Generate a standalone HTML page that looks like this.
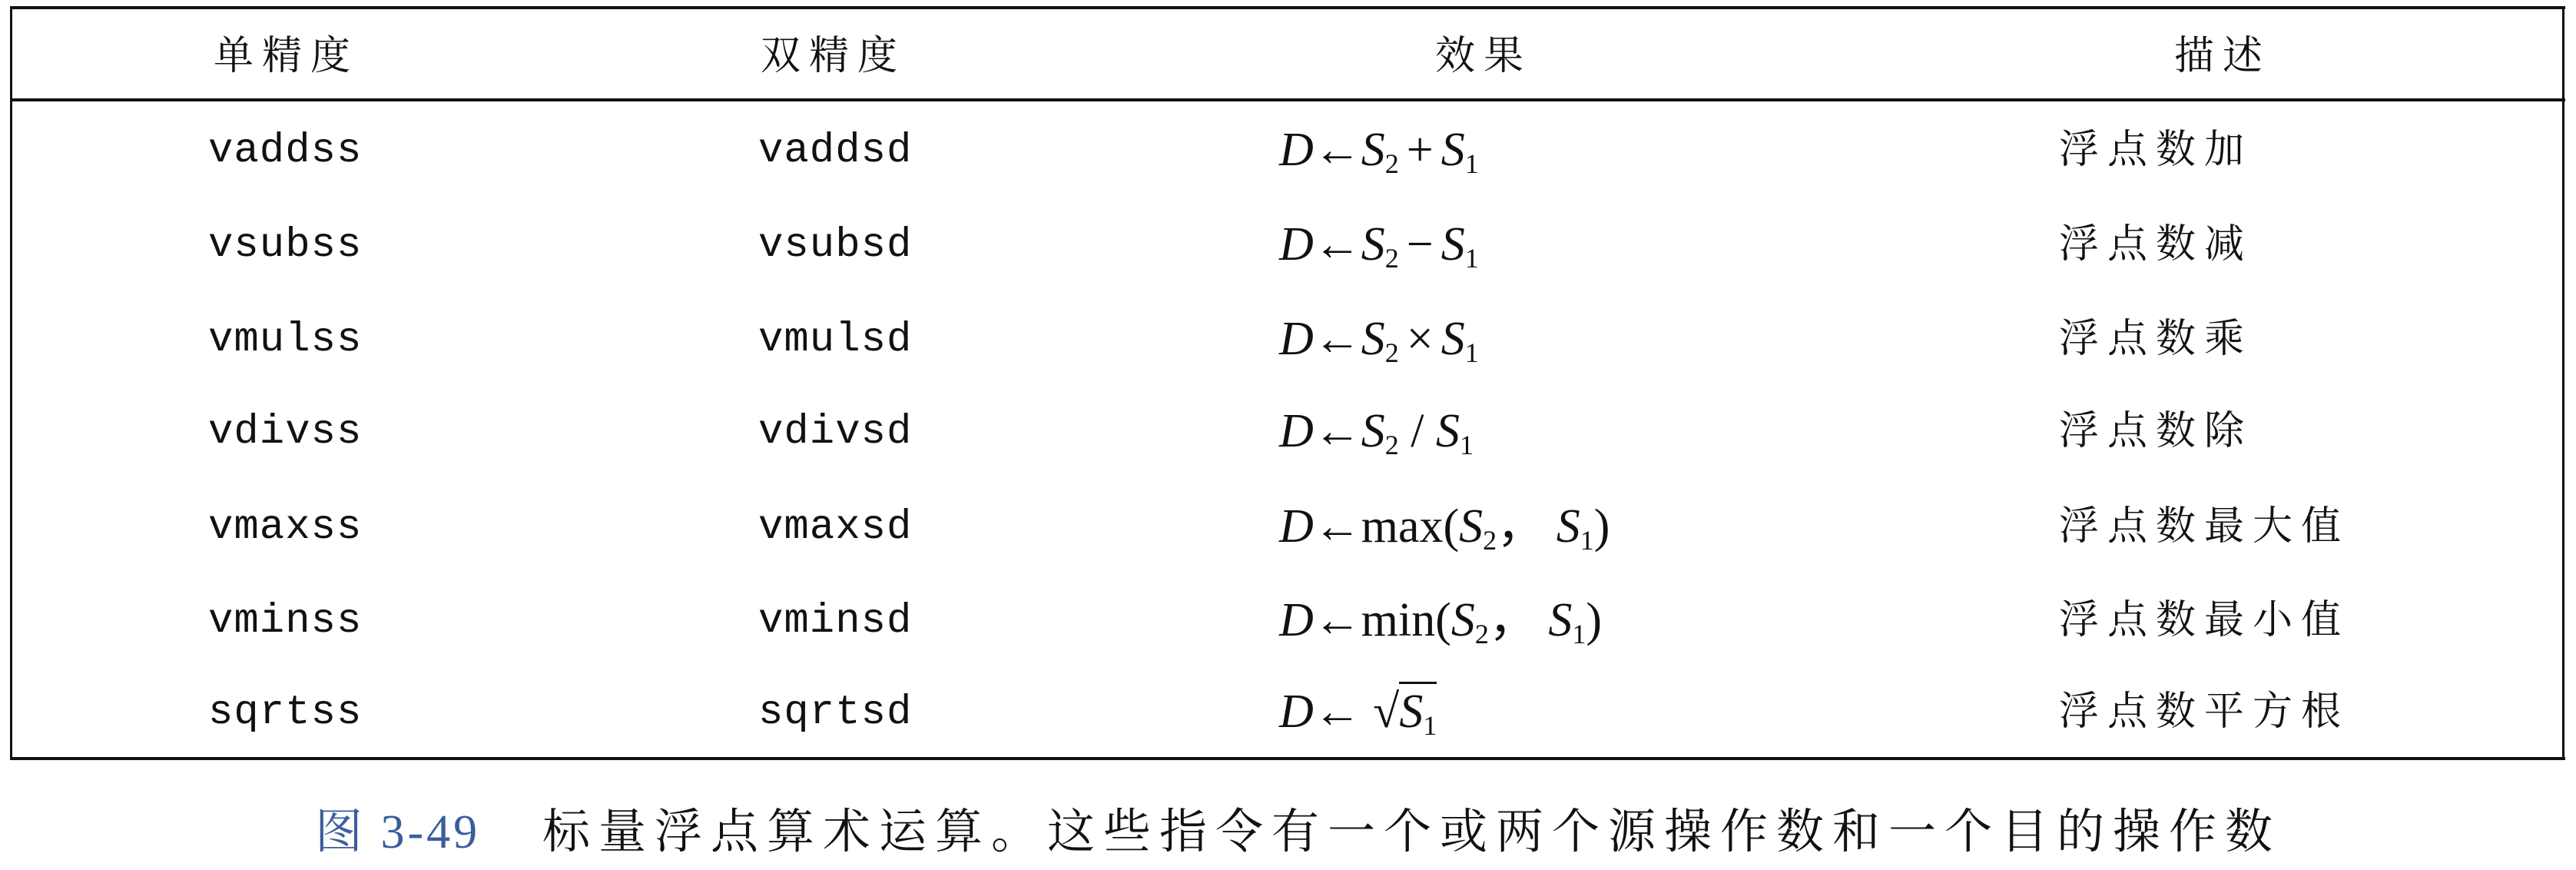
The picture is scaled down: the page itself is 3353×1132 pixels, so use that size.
<!DOCTYPE html>
<html><head><meta charset="utf-8"><style>
body{margin:0;width:3353px;height:1132px;background:#fff;position:relative;overflow:hidden;color:#111}
.l{position:absolute;background:#111}
.t{position:absolute;white-space:nowrap;line-height:1}
.cn{font-family:"Liberation Serif","Noto Serif CJK SC","Noto Sans CJK SC",serif;font-size:52px;letter-spacing:11px}
.mo{font-family:"Liberation Mono",monospace;font-size:54px;letter-spacing:1px}
.m{font-family:"Liberation Serif",serif;font-size:62px}
.m i{font-style:italic}
.m b{font-weight:normal;margin:0 10px}
.m sub{font-size:36px;vertical-align:-10px;font-style:normal}
.cap{font-family:"Liberation Serif","Noto Serif CJK SC","Noto Sans CJK SC",serif;font-size:62px;letter-spacing:11px}
</style></head><body>
<div class="l" style="left:13px;top:8px;width:3326px;height:4px"></div>
<div class="l" style="left:13px;top:128px;width:3326px;height:4px"></div>
<div class="l" style="left:13px;top:985px;width:3326px;height:4px"></div>
<div class="l" style="left:13px;top:8px;width:3px;height:980px"></div>
<div class="l" style="left:3335px;top:8px;width:3px;height:980px"></div>

<div class="t cn" style="left:278px;top:48px">单精度</div>
<div class="t cn" style="left:990px;top:48px">双精度</div>
<div class="t cn" style="left:1868px;top:48px">效果</div>
<div class="t cn" style="left:2830px;top:48px">描述</div>

<div class="t mo" style="left:271px;top:170px">vaddss</div>
<div class="t mo" style="left:987px;top:170px">vaddsd</div>
<div class="t m" style="left:1665px;top:164px"><i>D</i>←<i>S</i><sub>2</sub><b>+</b><i>S</i><sub>1</sub></div>
<div class="t cn" style="left:2680px;top:170px">浮点数加</div>

<div class="t mo" style="left:271px;top:293px">vsubss</div>
<div class="t mo" style="left:987px;top:293px">vsubsd</div>
<div class="t m" style="left:1665px;top:287px"><i>D</i>←<i>S</i><sub>2</sub><b>−</b><i>S</i><sub>1</sub></div>
<div class="t cn" style="left:2680px;top:293px">浮点数减</div>

<div class="t mo" style="left:271px;top:416px">vmulss</div>
<div class="t mo" style="left:987px;top:416px">vmulsd</div>
<div class="t m" style="left:1665px;top:410px"><i>D</i>←<i>S</i><sub>2</sub><b>×</b><i>S</i><sub>1</sub></div>
<div class="t cn" style="left:2680px;top:416px">浮点数乘</div>

<div class="t mo" style="left:271px;top:536px">vdivss</div>
<div class="t mo" style="left:987px;top:536px">vdivsd</div>
<div class="t m" style="left:1665px;top:530px"><i>D</i>←<i>S</i><sub>2</sub> / <i>S</i><sub>1</sub></div>
<div class="t cn" style="left:2680px;top:536px">浮点数除</div>

<div class="t mo" style="left:271px;top:660px">vmaxss</div>
<div class="t mo" style="left:987px;top:660px">vmaxsd</div>
<div class="t m" style="left:1665px;top:654px"><i>D</i>←max(<i>S</i><sub>2</sub>， <i>S</i><sub>1</sub>)</div>
<div class="t cn" style="left:2680px;top:660px">浮点数最大值</div>

<div class="t mo" style="left:271px;top:782px">vminss</div>
<div class="t mo" style="left:987px;top:782px">vminsd</div>
<div class="t m" style="left:1665px;top:776px"><i>D</i>←min(<i>S</i><sub>2</sub>， <i>S</i><sub>1</sub>)</div>
<div class="t cn" style="left:2680px;top:782px">浮点数最小值</div>

<div class="t mo" style="left:271px;top:901px">sqrtss</div>
<div class="t mo" style="left:987px;top:901px">sqrtsd</div>
<div class="t m" style="left:1665px;top:895px"><i>D</i>← √<span style="border-top:3px solid #111;padding-top:2px"><i>S</i><sub>1</sub></span></div>
<div class="t cn" style="left:2680px;top:901px">浮点数平方根</div>

<div class="t cap" style="left:410px;top:1052px;color:#3b5d9c;letter-spacing:4px">图 3-49</div>
<div class="t cap" style="left:706px;top:1052px">标量浮点算术运算。这些指令有一个或两个源操作数和一个目的操作数</div>
</body></html>
